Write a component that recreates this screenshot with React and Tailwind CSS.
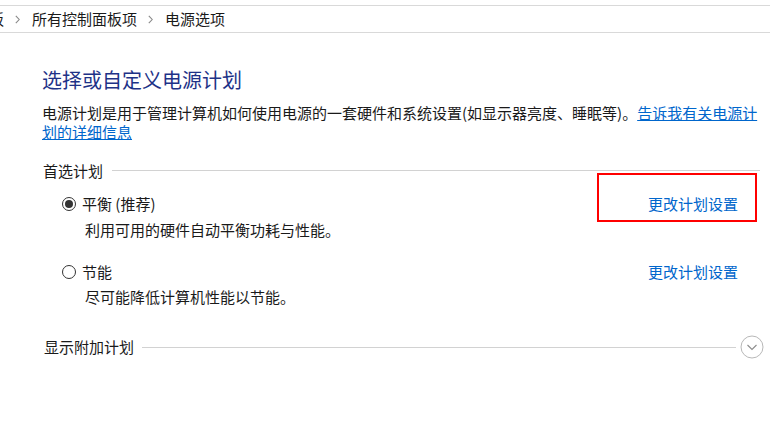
import React from "react";

const font = {
  fontFamily: '"Noto Sans CJK SC", "Noto Sans", sans-serif',
};

function Crumb() {
  return (
    <svg width="5" height="9" viewBox="0 0 5 9" className="shrink-0">
      <path d="M0.8 0.8 L4.2 4.5 L0.8 8.2" fill="none" stroke="#8a8a8a" strokeWidth="1.1" />
    </svg>
  );
}

function Radio({ checked }) {
  return (
    <span className="w-[14px] h-[14px] rounded-full border border-[#333] flex items-center justify-center shrink-0 bg-white">
      {checked && <span className="w-[8px] h-[8px] rounded-full bg-[#333]" />}
    </span>
  );
}

function Plan({ name, desc, checked, boxed, top, descTop }) {
  return (
    <div className={top}>
      <div className="relative flex items-center h-[20px] pr-[22px]">
        <div className="flex items-center gap-[6px] pl-[20px]">
          <Radio checked={checked} />
          <span>{name}</span>
        </div>
        <a className="ml-auto text-[#0066cc] cursor-pointer">更改计划设置</a>
        {boxed && (
          <div className="absolute left-[555px] top-[-21px] w-[160px] h-[49px] border-2 border-[#ff0000]" />
        )}
      </div>
      <div className={`pl-[43px] h-[20px] leading-[20px] ${descTop}`}>{desc}</div>
    </div>
  );
}

export default function App() {
  return (
    <div
      className="w-[770px] h-[422px] bg-white overflow-hidden text-[15px] text-[#1a1a1a]"
      style={font}
    >
      {/* top strip */}
      <div className="h-[6px] border-b border-[#d9d9d9]" />

      {/* breadcrumb, first crumb scrolled off to the left */}
      <div className="h-[27px] border-b border-[#d9d9d9] flex items-center whitespace-nowrap overflow-hidden leading-[20px]">
        <span className="ml-[-56px]">控制面板</span>
        <span className="ml-[11px] mr-[12px] flex">
          <Crumb />
        </span>
        <span>所有控制面板项</span>
        <span className="ml-[11px] mr-[12px] flex">
          <Crumb />
        </span>
        <span>电源选项</span>
      </div>

      <div className="pl-[42px] pr-[10px] pt-[33px] leading-[20px]">
        <h1 className="text-[20px] leading-[28px] text-[#1e3287] font-normal">
          选择或自定义电源计划
        </h1>

        <p className="mt-[9px] leading-[19px] whitespace-nowrap">
          电源计划是用于管理计算机如何使用电源的一套硬件和系统设置(如显示器亮度、睡眠等)。
          <a className="text-[#0066cc] underline cursor-pointer">
            告诉我有关电源计
            <br />
            划的详细信息
          </a>
        </p>

        {/* preferred plans */}
        <div className="mt-[20px] flex items-center gap-[9px] h-[20px]">
          <span className="pl-[1px]">首选计划</span>
          <div className="flex-1 h-px bg-[#d2d2d2] mt-[-2px]" />
        </div>

        <Plan
          name="平衡 (推荐)"
          desc="利用可用的硬件自动平衡功耗与性能。"
          checked
          boxed
          top="mt-[13px]"
          descTop="mt-[6px]"
        />
        <Plan
          name="节能"
          desc="尽可能降低计算机性能以节能。"
          top="mt-[22px]"
          descTop="mt-[5px]"
        />

        {/* additional plans */}
        <div className="mt-[30px] flex items-center h-[20px] mr-[-4px]">
          <span className="pl-[2px]">显示附加计划</span>
          <div className="flex-1 h-px bg-[#d2d2d2] ml-[8px] mr-[4px]" />
          <svg width="24" height="24" viewBox="0 0 24 24" className="shrink-0">
            <circle cx="12" cy="12" r="11" fill="white" stroke="#b8b8b8" strokeWidth="1" />
            <path d="M7.5 10 L12 14.5 L16.5 10" fill="none" stroke="#8c8c8c" strokeWidth="1.1" />
          </svg>
        </div>
      </div>
    </div>
  );
}
